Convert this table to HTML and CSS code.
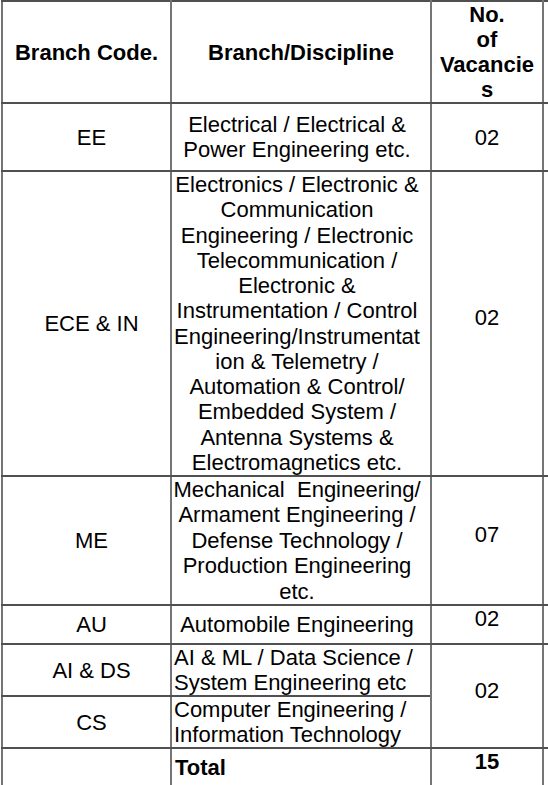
FILE: index.html
```html
<!DOCTYPE html>
<html lang="en">
<head>
<meta charset="utf-8">
<title>Vacancies</title>
<link rel="stylesheet" href="styles.css">
</head>
<body>
<table class="vac">
  <colgroup>
    <col class="c-code">
    <col class="c-disc">
    <col class="c-num">
    <col class="c-extra">
  </colgroup>
  <tr class="r-head">
    <th>Branch Code.</th>
    <th>Branch/Discipline</th>
    <th>No.<br>of<br>Vacancie<br>s</th>
    <td class="extra"></td>
  </tr>
  <tr class="r-ee">
    <td class="code">EE</td>
    <td class="disc">Electrical / Electrical &amp;<br>Power Engineering etc.</td>
    <td class="num">02</td>
    <td class="extra"></td>
  </tr>
  <tr class="r-ece">
    <td class="code">ECE &amp; IN</td>
    <td class="disc disc-ece">Electronics / Electronic &amp;<br>Communication<br>Engineering / Electronic<br>Telecommunication /<br>Electronic &amp;<br>Instrumentation / Control<br>Engineering/Instrumentat<br>ion &amp; Telemetry /<br>Automation &amp; Control/<br>Embedded System /<br>Antenna Systems &amp;<br>Electromagnetics etc.</td>
    <td class="num num-raised">02</td>
    <td class="extra"></td>
  </tr>
  <tr class="r-me">
    <td class="code">ME</td>
    <td class="disc disc-me">Mechanical&nbsp; Engineering/<br>Armament Engineering /<br>Defense Technology /<br>Production Engineering<br>etc.</td>
    <td class="num num-raised">07</td>
    <td class="extra"></td>
  </tr>
  <tr class="r-au">
    <td class="code">AU</td>
    <td class="disc">Automobile Engineering</td>
    <td class="num num-top">02</td>
    <td class="extra"></td>
  </tr>
  <tr class="r-ai">
    <td class="code">AI &amp; DS</td>
    <td class="disc left split-dark">AI &amp; ML / Data Science /<br>System Engineering etc</td>
    <td class="num num-raised" rowspan="2">02</td>
    <td class="extra" rowspan="2"></td>
  </tr>
  <tr class="r-cs">
    <td class="code">CS</td>
    <td class="disc left">Computer Engineering /<br>Information Technology</td>
  </tr>
  <tr class="r-total">
    <td class="code"></td>
    <td class="disc left total">Total</td>
    <td class="num num-top total">15</td>
    <td class="extra"></td>
  </tr>
</table>
</body>
</html>
```

FILE: styles.css
```css
html, body {
  margin: 0;
  padding: 0;
  background: #ffffff;
}

body {
  font-family: "Liberation Sans", Arial, sans-serif;
  font-size: 22px;
  line-height: 25px;
  color: #000000;
  overflow: hidden;
}

.vac {
  border-collapse: collapse;
  table-layout: fixed;
  width: 553px;
  margin: 0 0 0 1px;
}

.c-code { width: 169px; }
.c-disc { width: 260px; }
.c-num { width: 112px; }
.c-extra { width: 12px; }

.vac th,
.vac td {
  border-top: 2px solid #505050;
  border-bottom: 2px solid #505050;
  border-left: 2px solid #757575;
  border-right: 2px solid #757575;
  padding: 0;
  vertical-align: middle;
  text-align: center;
  white-space: nowrap;
  overflow: hidden;
}

.vac th {
  font-weight: bold;
}

.r-head { height: 102px; }
.r-ee { height: 68px; }
.r-ece { height: 305px; }
.r-me { height: 128px; }
.r-au { height: 39px; }
.r-ai { height: 50px; }
.r-cs { height: 52px; }
.r-total { height: 38px; }

.vac td.code {
  padding-left: 10px;
}

.vac td.disc {
  padding: 0 9px 0 1px;
}

.vac td.disc-ece {
  line-height: 25.25px;
}

.vac td.disc-me {
  line-height: 25.4px;
}

.vac td.disc.left {
  text-align: left;
  padding-left: 2px;
}

.vac td.num-raised {
  padding-bottom: 12px;
}

.vac td.num-top {
  vertical-align: top;
}

.total {
  font-weight: bold;
}

.vac td.disc.total {
  padding-left: 3px;
}

.vac td.split-dark {
  border-bottom: 1px solid #000000;
}

.vac td.extra {
  border-right: none;
}
```
